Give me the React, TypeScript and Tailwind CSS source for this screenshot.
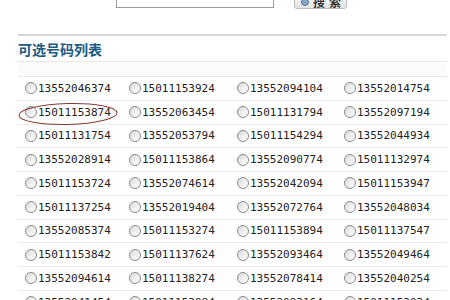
import React from "react";

const rows: string[][] = [
  ["13552046374", "15011153924", "13552094104", "13552014754"],
  ["15011153874", "13552063454", "15011131794", "13552097194"],
  ["15011131754", "13552053794", "15011154294", "13552044934"],
  ["13552028914", "15011153864", "13552090774", "15011132974"],
  ["15011153724", "13552074614", "13552042094", "15011153947"],
  ["15011137254", "13552019404", "13552072764", "13552048034"],
  ["13552085374", "15011153274", "15011153894", "15011137547"],
  ["15011153842", "15011137624", "13552093464", "13552049464"],
  ["13552094614", "15011138274", "13552078414", "13552040254"],
  ["13552041454", "15011153984", "13552093164", "15011153034"],
];

function Radio() {
  return (
    <span className="inline-block w-[12px] h-[12px] rounded-full border border-[#8a8a8a] bg-gradient-to-br from-[#dcdcdc] to-white shrink-0" />
  );
}

function NumberCell({ value }: { value: string }) {
  return (
    <div className="flex items-center gap-[1px] pl-[7px]">
      <Radio />
      <span className="text-[11px] leading-none text-[#222] font-['DejaVu_Sans_Mono',monospace]">
        {value}
      </span>
    </div>
  );
}

export default function App() {
  return (
    <div className="w-[450px] h-[300px] overflow-hidden bg-white relative">
      {/* search bar, mostly scrolled off the top */}
      <div className="h-[9px] flex items-end overflow-hidden">
        <div className="ml-[116px] w-[158px] h-[20px] border border-[#9a9a9a] bg-white mb-[1px]" />
        <div className="ml-[20px] w-[53px] h-[20px] shrink-0 rounded-[3px] border border-[#bdbdbd] bg-gradient-to-b from-white to-[#e4e4e4] flex items-center pl-[6px] pt-[6px] gap-[4px]">
          <span className="w-[8px] h-[8px] rounded-full bg-[#86a6c8] border border-[#5a7ca0]" />
          <span className="text-[12px] leading-none font-bold tracking-[4px] text-[#333] font-['Noto_Sans_CJK_SC',sans-serif]">
            搜索
          </span>
        </div>
      </div>

      <div className="mt-[25px] ml-[18px] mr-[3px] border-t-2 border-[#d6d6d6]">
        <div className="h-[26px] flex items-center border-b border-[#e8e8e8]">
          <span className="text-[14px] font-bold text-[#1d5c82] font-['Noto_Sans_CJK_SC',sans-serif] leading-none">
            可选号码列表
          </span>
        </div>
        <div className="h-[15px] border-b border-[#ececec] bg-[#fbfbfb]" />
        {rows.map((row, i) => (
          <div
            key={i}
            className="grid grid-cols-[104px_108px_107px_1fr] h-[23.75px] items-center border-b border-[#ededed]"
          >
            {row.map((n) => (
              <NumberCell key={n} value={n} />
            ))}
          </div>
        ))}
      </div>

      {/* hand-drawn marker round the chosen number */}
      <svg
        className="absolute left-[17px] top-[101px] pointer-events-none"
        width="104"
        height="26"
        viewBox="0 0 104 26"
      >
        <ellipse
          cx="51"
          cy="13"
          rx="49"
          ry="10.5"
          fill="none"
          stroke="#8c3a3a"
          strokeWidth="1"
          transform="rotate(-1.5 51 13)"
        />
      </svg>
    </div>
  );
}
